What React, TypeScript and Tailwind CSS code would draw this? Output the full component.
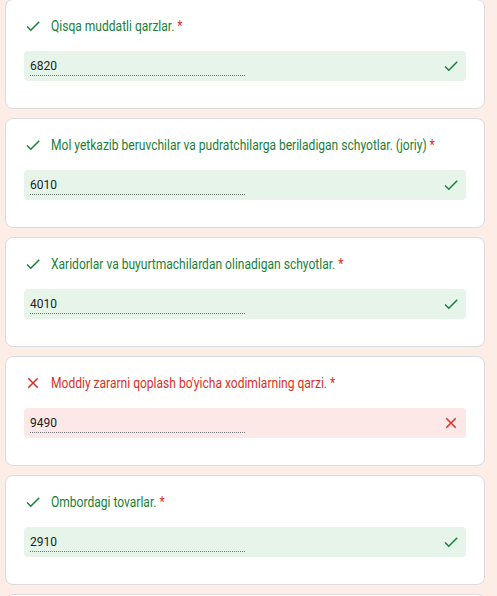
const ITEMS = [
  { title: "Qisqa muddatli qarzlar.", value: "6820", ok: true },
  {
    title: "Mol yetkazib beruvchilar va pudratchilarga beriladigan schyotlar. (joriy)",
    value: "6010",
    ok: true,
  },
  { title: "Xaridorlar va buyurtmachilardan olinadigan schyotlar.", value: "4010", ok: true },
  { title: "Moddiy zararni qoplash bo'yicha xodimlarning qarzi.", value: "9490", ok: false },
  { title: "Ombordagi tovarlar.", value: "2910", ok: true },
  { title: "Asosiy vositalar.", value: "0100", ok: true },
];

function CheckIcon() {
  return (
    <svg viewBox="0 0 24 24" className="h-[18px] w-[18px] shrink-0 fill-[#188038]">
      <path d="M9 16.17L4.83 12l-1.42 1.41L9 19 21 7l-1.41-1.41z" />
    </svg>
  );
}

function CloseIcon() {
  return (
    <svg viewBox="0 0 24 24" className="h-[18px] w-[18px] shrink-0 fill-[#d93025]">
      <path d="M19 6.41L17.59 5 12 10.59 6.41 5 5 6.41 10.59 12 5 17.59 6.41 19 12 13.41 17.59 19 19 17.59 13.41 12z" />
    </svg>
  );
}

function QuestionCard({ title, value, ok }: { title: string; value: string; ok: boolean }) {
  return (
    <div className="w-[480px] rounded-lg border border-[#dadce0] bg-white px-[18px] pb-[27px] pt-[16px]">
      <div className="flex h-5 items-center gap-[9px]">
        {ok ? <CheckIcon /> : <CloseIcon />}
        <span
          className={`inline-block origin-left scale-x-[0.86] whitespace-nowrap text-[14px] leading-5 ${
            ok ? "text-[#188038]" : "text-[#d93025]"
          }`}
        >
          {title} <span className="text-[#d93025]">*</span>
        </span>
      </div>
      <div
        className={`mt-[15px] flex h-[30px] items-center justify-between rounded px-[6px] ${
          ok ? "bg-[#e6f4ea]" : "bg-[#fce8e6]"
        }`}
      >
        <div className="mt-[2px] w-[215px] border-b border-dotted border-[#70757a] pb-[2px] text-[12px] leading-[14px] text-[#202124]">
          {value}
        </div>
        {ok ? <CheckIcon /> : <CloseIcon />}
      </div>
    </div>
  );
}

export default function App() {
  return (
    <div
      className="h-[596px] overflow-hidden bg-[#fdede7] pl-[5px]"
      style={{ fontFamily: "Roboto, Arial, sans-serif" }}
    >
      <div className="-mt-px flex flex-col gap-[9px]">
        {ITEMS.map((item) => (
          <QuestionCard key={item.value} {...item} />
        ))}
      </div>
    </div>
  );
}
